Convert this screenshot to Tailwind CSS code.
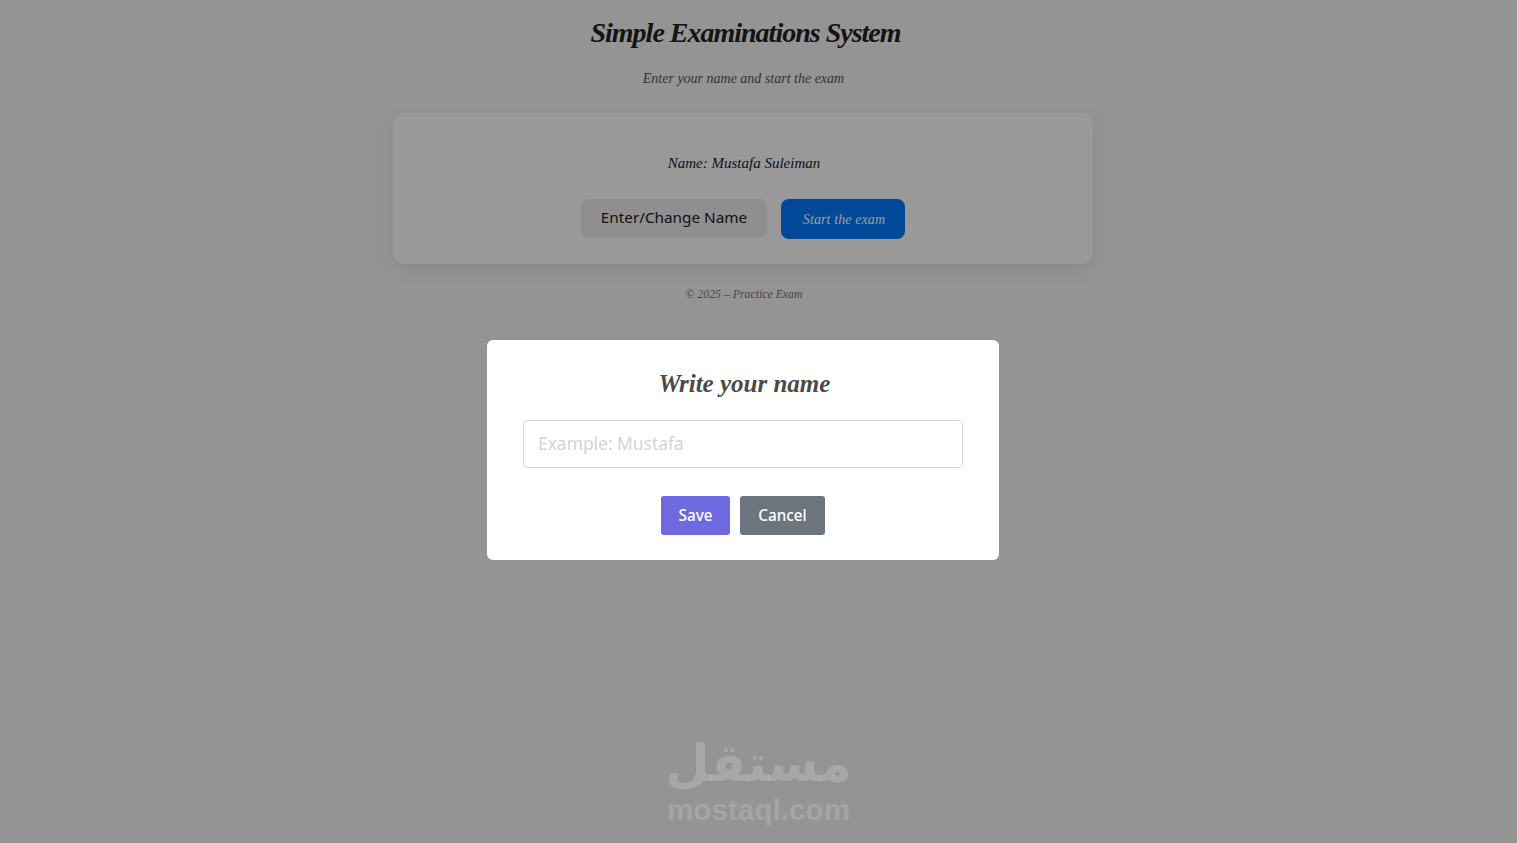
<!DOCTYPE html>
<html lang="en">
<head>
<meta charset="utf-8">
<title>Simple Examinations System</title>
<script src="https://cdn.jsdelivr.net/npm/@tailwindcss/browser@4"></script>
</head>
<body class="relative h-[843px] overflow-hidden bg-[#f7f7f7] font-['Noto_Sans',sans-serif]">
  <main class="flex w-[1486px] flex-col items-center pt-[12px] font-['Liberation_Serif',serif] italic">
    <h1 class="pl-[5px] text-[28px] leading-[42px] font-bold tracking-[-1px] text-[#222]">Simple Examinations System</h1>
    <p class="mt-[16px] pl-[1px] text-[14px] leading-[18px] text-[#555]">Enter your name and start the exam</p>
    <section class="mt-[25px] flex h-[151px] w-[700px] flex-col items-center rounded-[12px] bg-white pt-[39px] shadow-[0_6px_18px_rgba(0,0,0,0.08)]">
      <p class="pl-[2px] text-[15px] leading-[22px] text-[#1a2230]">Name: Mustafa Suleiman</p>
      <div class="mt-[25px] flex items-start gap-[14px]">
        <button class="h-[39px] w-[186px] rounded-[8px] bg-[#eee] pb-[2px] font-['Noto_Sans',sans-serif] text-[15.3px] text-[#222] not-italic">Enter/Change Name</button>
        <button class="h-[40px] w-[124px] rounded-[8px] bg-[#007bff] pl-[2px] text-[14px] tracking-[0.1px] text-white">Start the exam</button>
      </div>
    </section>
    <p class="mt-[22px] pl-[2px] text-[11.8px] leading-[16px] text-[#777]">© 2025 – Practice Exam</p>
  </main>

  <div class="absolute inset-0 bg-black/40"></div>

  <div class="absolute bottom-[16px] left-1/2 flex -translate-x-1/2 flex-col items-center text-white/[0.18]">
    <span lang="ar" dir="rtl" class="h-[59px] text-[51px] leading-[59px] font-bold font-['DejaVu_Sans',sans-serif]">مستقل</span>
    <span class="text-[29.7px] leading-[34px] font-bold font-['Liberation_Sans',sans-serif]">mostaql.com</span>
  </div>

  <div class="absolute top-[340px] left-[487px] flex h-[220px] w-[512px] flex-col items-center rounded-[6px] bg-white px-[36px] pt-[26px]">
    <h2 class="pl-[3px] font-['Liberation_Serif',serif] text-[25px] leading-[36px] font-bold text-[#4a4a4a] italic">Write your name</h2>
    <input type="text" placeholder="Example: Mustafa" class="mt-[18px] h-[48px] w-[440px] rounded-[4px] border border-[#d5d8dd] px-[14px] pb-[2px] text-[17.4px] outline-none placeholder:text-[#d4d4d4]">
    <div class="mt-[28px] flex gap-[10px]">
      <button class="h-[39px] w-[69px] rounded-[3px] bg-[#6f69e0] pb-[1px] text-[15.3px] font-medium text-white">Save</button>
      <button class="h-[39px] w-[85px] rounded-[3px] bg-[#6c757d] pb-[1px] text-[15.3px] font-medium text-white">Cancel</button>
    </div>
  </div>
</body>
</html>
